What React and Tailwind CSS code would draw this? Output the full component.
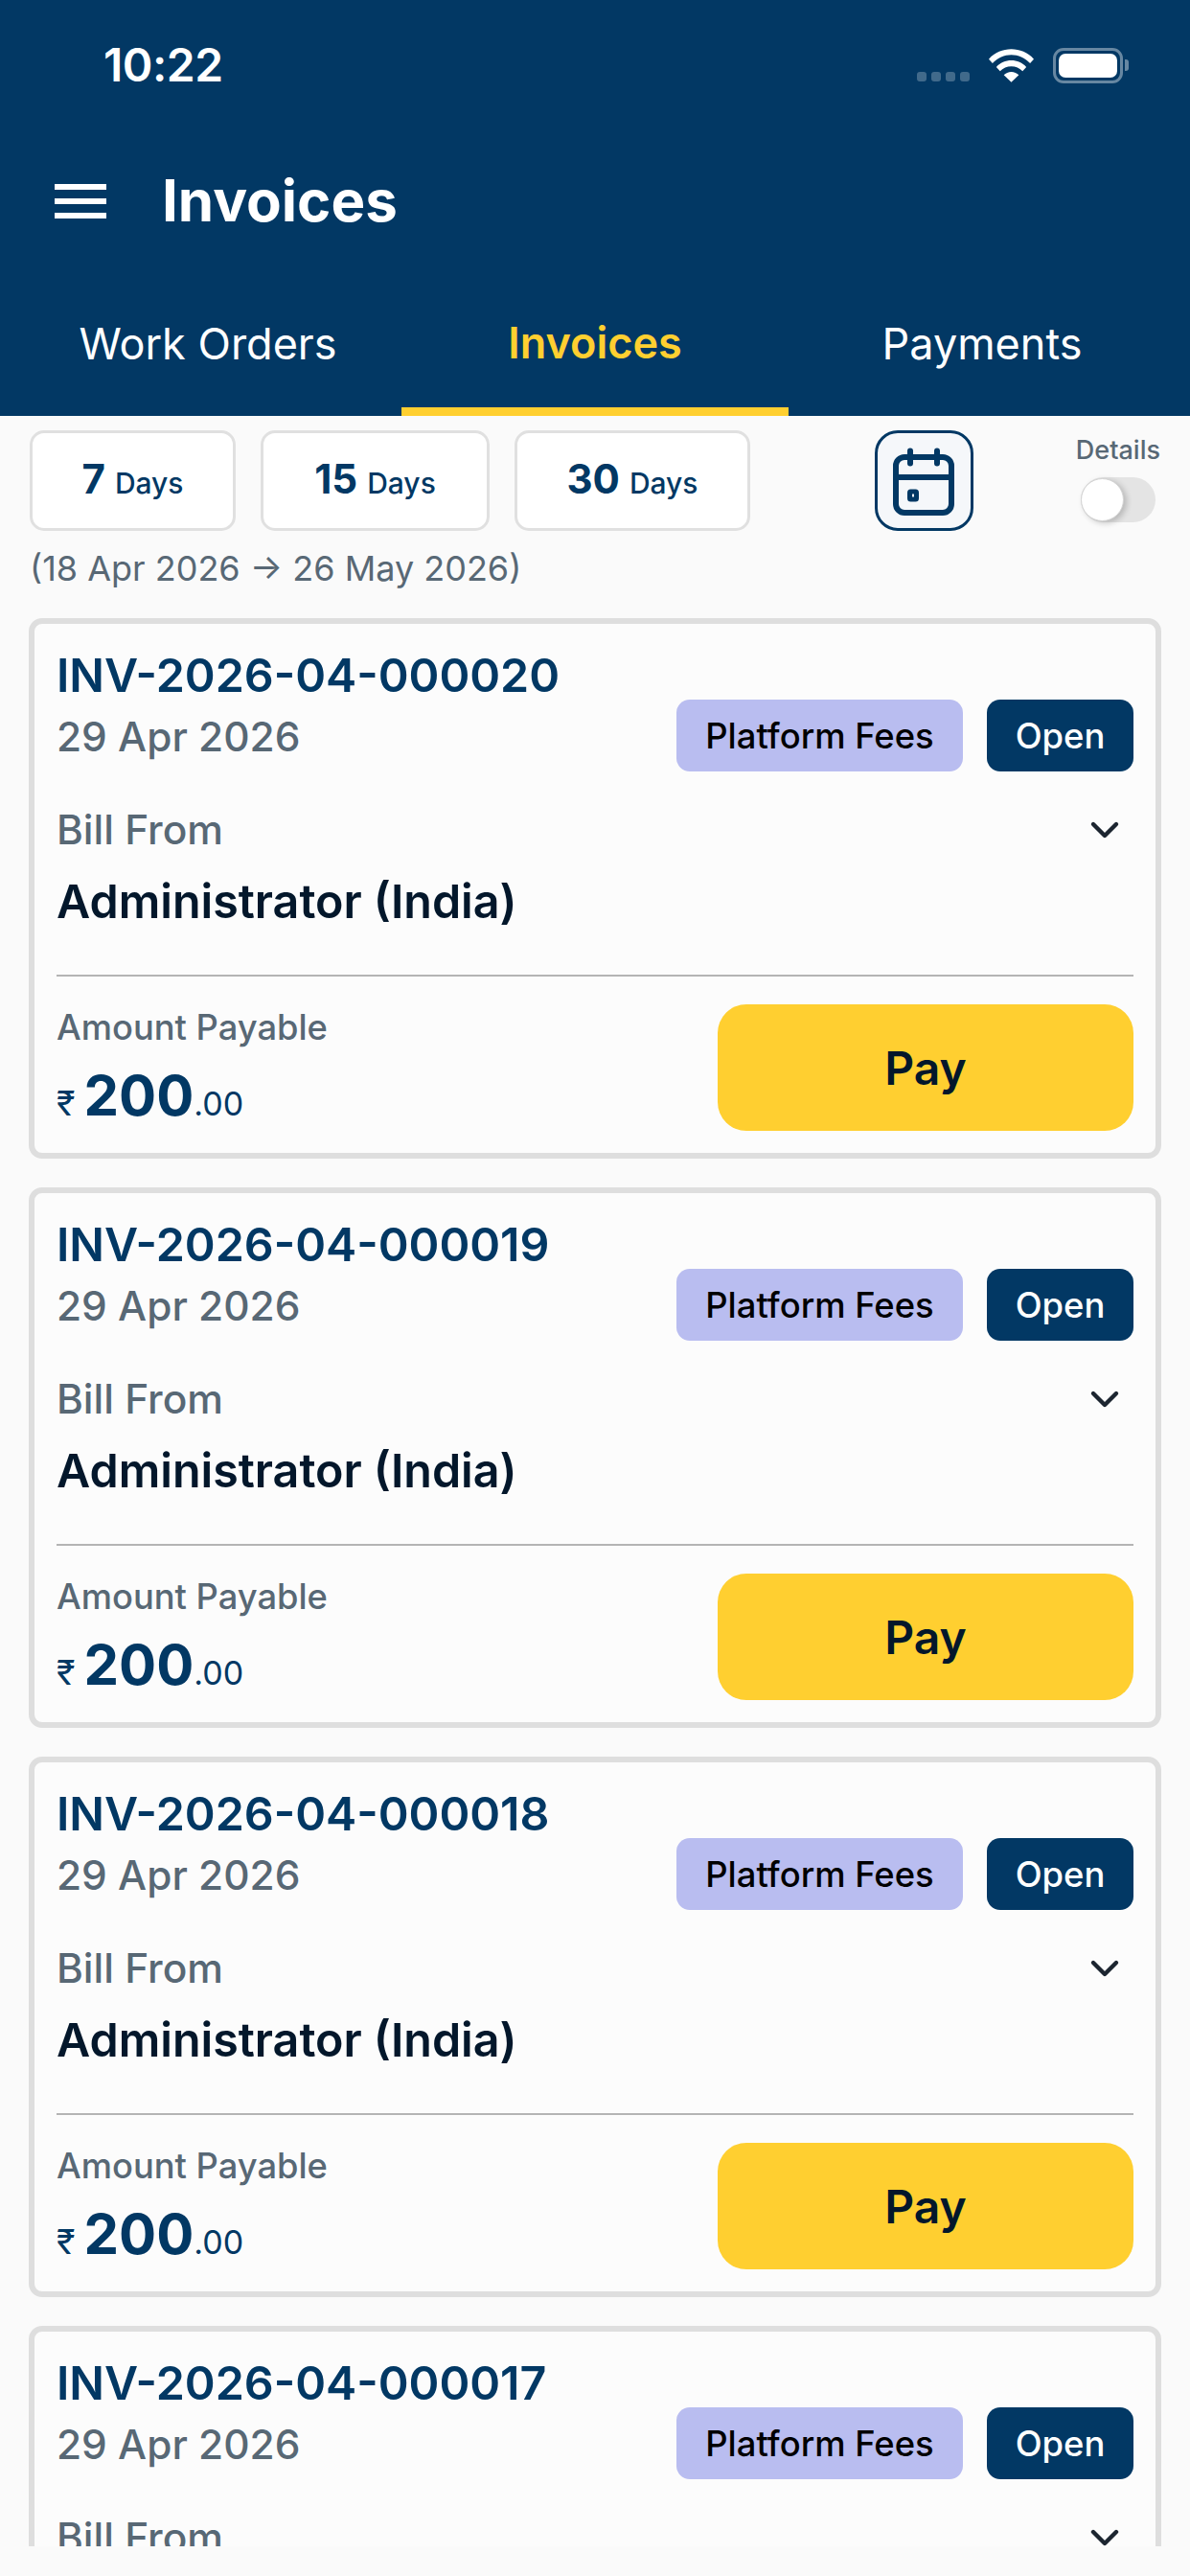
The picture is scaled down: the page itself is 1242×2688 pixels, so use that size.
import { ChevronDown } from "lucide-react";

const invoices = ["INV-2026-04-000020", "INV-2026-04-000019", "INV-2026-04-000018", "INV-2026-04-000017"];

function StatusBar() {
  return (
    <div className="flex h-[136px] items-center justify-between pl-[108px] pr-[64px]">
      <span className="text-[48px] leading-none font-semibold tracking-[-0.5px] text-white">10:22</span>
      <div className="flex items-center">
        <div className="mt-[24px] mr-[20px] flex gap-[5px]">
          <span className="h-[10px] w-[10px] rounded-[3px] bg-white/25" />
          <span className="h-[10px] w-[10px] rounded-[3px] bg-white/25" />
          <span className="h-[10px] w-[10px] rounded-[3px] bg-white/25" />
          <span className="h-[10px] w-[10px] rounded-[3px] bg-white/25" />
        </div>
        <svg width="47" height="36" viewBox="0 0 48 36" className="mr-[20px]">
          <path d="M0 11.500C6.500 4.500 15 1 24 1s17.500 3.500 24 10.500l-4 4.500C38.500 10 31.500 7 24 7S9.500 10 4 16z" fill="#fff" />
          <path d="M8 20c4-4.500 10-7 16-7s12 2.500 16 7l-4 4.500c-3-3.200-7.500-5.200-12-5.200s-9 2-12 5.200z" fill="#fff" />
          <path d="M16 28.500c2-2 5-3.300 8-3.300s6 1.300 8 3.300L24 36z" fill="#fff" />
        </svg>
        <div className="flex items-center">
          <div className="h-[37px] w-[73px] rounded-[11px] border-[3px] border-white/40 p-[3px]">
            <div className="h-full w-full rounded-[7px] bg-white" />
          </div>
          <div className="ml-[2px] h-[12px] w-[4px] rounded-r-[3px] bg-white/40" />
        </div>
      </div>
    </div>
  );
}

function Header() {
  return (
    <div className="bg-[#023864]">
      <StatusBar />
      <div className="flex h-[148px] items-center pl-[57px]">
        <div className="flex w-[54px] flex-col gap-[9px]">
          <span className="h-[6px] bg-white" />
          <span className="h-[6px] bg-white" />
          <span className="h-[6px] bg-white" />
        </div>
        <span className="mb-[2px] ml-[58px] text-[60px] leading-none font-bold text-white">Invoices</span>
      </div>
      <div className="flex h-[150px] px-[15px]">
        <div className="flex w-[404px] items-center justify-center text-[45px] font-normal text-white">Work Orders</div>
        <div className="flex w-[404px] items-center justify-center border-b-[9px] border-[#ffcf30] pt-[6px] text-[45px] font-semibold text-[#ffcf30]">Invoices</div>
        <div className="flex w-[404px] items-center justify-center text-[45px] font-normal text-white">Payments</div>
      </div>
    </div>
  );
}

function DayChip({ n, width }) {
  return (
    <div className={`flex h-[105px] ${width} items-baseline justify-center rounded-[15px] border-[3px] border-[#e0e0e0] bg-white pt-[23px] text-[#023864]`}>
      <span className="text-[42px] leading-[50px] font-bold">{n}</span>
      <span className="ml-[10px] text-[30px] font-medium">Days</span>
    </div>
  );
}

function Filters() {
  return (
    <div className="px-[31px] pt-[15px]">
      <div className="flex items-start">
        <div className="flex gap-[26px]">
          <DayChip n="7" width="w-[215px]" />
          <DayChip n="15" width="w-[239px]" />
          <DayChip n="30" width="w-[246px]" />
        </div>
        <div className="ml-[130px] flex h-[105px] w-[104px] items-center justify-center rounded-[24px] border-[3px] border-[#023864] bg-[#f5f7fa]">
          <svg width="66" height="72" viewBox="0 0 66 72" fill="none" stroke="#023864" strokeWidth="6" strokeLinecap="round">
            <rect x="4" y="11" width="58" height="58" rx="9" />
            <path d="M4 32h58" />
            <path d="M19 4.500v13M47 4.500v13" />
            <rect x="18.500" y="47" width="7" height="8" rx="1" strokeWidth="5" />
          </svg>
        </div>
        <div className="ml-[107px] flex flex-col items-center">
          <span className="text-[27px] leading-[42px] font-medium text-[#586875]">Details</span>
          <div className="mt-[7px] flex h-[47px] w-[78px] items-center rounded-full bg-[#e4e4e4]">
            <div className="h-[45px] w-[45px] rounded-full border border-[#d4d4d4] bg-white shadow-[3px_2px_6px_rgba(0,0,0,0.2)]" />
          </div>
        </div>
      </div>
      <p className="mt-[17px] text-[36px] leading-[44px] text-[#586875]">(18 Apr 2026 → 26 May 2026)</p>
    </div>
  );
}

function InvoiceCard({ id }) {
  return (
    <div className="h-[564px] shrink-0 rounded-[14px] border-[6px] border-[#dedede] bg-[#fcfcfc] px-[23px] pt-[25px]">
      <div className="flex items-start justify-between">
        <div className="flex flex-col">
          <span className="text-[48.3px] leading-[58px] font-semibold text-[#023864]">{id}</span>
          <span className="mt-[5px] text-[42.4px] leading-[60px] font-medium text-[#586875]">29 Apr 2026</span>
        </div>
        <div className="mt-[54px] flex gap-[25px]">
          <span className="flex h-[75px] w-[299px] items-center justify-center rounded-[14px] bg-[#b9bdf0] pt-[2px] text-[36.4px] font-medium text-black">Platform Fees</span>
          <span className="flex h-[75px] w-[153px] items-center justify-center rounded-[14px] bg-[#023864] pt-[2px] text-[36.4px] font-medium text-white">Open</span>
        </div>
      </div>
      <div className="mt-[31px] flex items-center justify-between">
        <span className="text-[42.4px] leading-[60px] font-medium text-[#586875]">Bill From</span>
        <ChevronDown size={48} strokeWidth={2.2} className="mr-[6px] text-[#1c2530]" />
      </div>
      <p className="mt-[15px] text-[48.4px] leading-[60px] font-semibold text-[#03172b]">Administrator (India)</p>
      <div className="mt-[46px] border-t-2 border-[#b4b4b4]" />
      <div className="mt-[29px] flex items-start justify-between">
        <div className="flex flex-col">
          <span className="mt-[2px] text-[36.3px] leading-[44px] font-medium text-[#586875]">Amount Payable</span>
          <div className="mt-[9px] flex items-baseline text-[#023864]">
            <span className="text-[36px] leading-none font-normal">₹</span>
            <span className="ml-[9px] text-[58px] leading-[80px] font-bold">200</span>
            <span className="text-[34px] leading-none font-normal">.00</span>
          </div>
        </div>
        <div className="flex h-[132px] w-[434px] items-center justify-center rounded-[30px] bg-[#ffcf30] pt-[2px] text-[48px] font-semibold text-[#03172b]">Pay</div>
      </div>
    </div>
  );
}

export default function App() {
  return (
    <div className="flex h-[2688px] w-[1242px] flex-col overflow-hidden bg-[#fafafa] font-['Inter',sans-serif]">
      <Header />
      <Filters />
      <div className="mt-[30px] flex h-[2012px] flex-col gap-[30px] overflow-hidden px-[30px]">
        {invoices.map((id) => (
          <InvoiceCard key={id} id={id} />
        ))}
      </div>
    </div>
  );
}
